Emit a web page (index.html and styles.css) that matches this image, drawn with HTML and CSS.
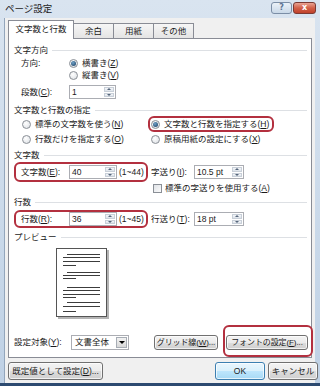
FILE: index.html
```html
<!DOCTYPE html>
<html lang="ja">
<head>
    <meta charset="UTF-8">
    <meta name="viewport" content="width=device-width, initial-scale=1.0">
    <title>ページ設定</title>
    <link rel="stylesheet" href="styles.css">
</head>
<body>
    <div class="window">
        <div class="titlebar">
            <span class="title">ページ設定</span>
            <div class="caption">
                <span class="cbtn help">?</span>
                <span class="cbtn close">x</span>
            </div>
        </div>

        <div class="client">
            <div class="tabs">
                <div class="tab active">文字数と行数</div>
                <div class="tab">余白</div>
                <div class="tab">用紙</div>
                <div class="tab">その他</div>
            </div>

            <div class="panel">
                <div class="grp h14">文字方向</div>
                <div class="row h12">
                    <span class="lbl">方向:</span>
                    <span class="opt"><span class="radio on"></span><span>横書き(<u>Z</u>)</span></span>
                </div>
                <div class="row h12">
                    <span class="opt ind-col"><span class="radio"></span><span>縦書き(<u>V</u>)</span></span>
                </div>
                <div class="row h22">
                    <span class="lbl">段数(<u>C</u>):</span>
                    <div class="field w47">
                        <span class="val">1</span>
                        <span class="spin"><span class="up"></span><span class="dn"></span></span>
                    </div>
                </div>

                <div class="grp h14">文字数と行数の指定</div>
                <div class="row h14">
                    <span class="opt left-opt"><span class="radio"></span><span>標準の文字数を使う(<u>N</u>)</span></span>
                    <span class="ring ring-radio">
                        <span class="opt"><span class="radio on"></span><span>文字数と行数を指定する(<u>H</u>)</span></span>
                    </span>
                </div>
                <div class="row h16">
                    <span class="opt left-opt"><span class="radio"></span><span>行数だけを指定する(<u>O</u>)</span></span>
                    <span class="opt right-opt"><span class="radio"></span><span>原稿用紙の設定にする(<u>X</u>)</span></span>
                </div>

                <div class="grp h16">文字数</div>
                <div class="row h18">
                    <span class="ring ring-count h20">
                        <span class="lbl">文字数(<u>E</u>):</span>
                        <div class="field w48">
                            <span class="val">40</span>
                            <span class="spin"><span class="up"></span><span class="dn"></span></span>
                        </div>
                        <span class="range">(1~44)</span>
                    </span>
                    <span class="lbl2">字送り(<u>I</u>):</span>
                    <div class="field w50">
                        <span class="val">10.5 pt</span>
                        <span class="spin"><span class="up"></span><span class="dn"></span></span>
                    </div>
                </div>
                <div class="row h14">
                    <span class="opt check-opt"><span class="check"></span><span>標準の字送りを使用する(<u>A</u>)</span></span>
                </div>

                <div class="grp h14">行数</div>
                <div class="row h20">
                    <span class="ring ring-count h18">
                        <span class="lbl">行数(<u>R</u>):</span>
                        <div class="field w48">
                            <span class="val">36</span>
                            <span class="spin"><span class="up"></span><span class="dn"></span></span>
                        </div>
                        <span class="range">(1~45)</span>
                    </span>
                    <span class="lbl2">行送り(<u>T</u>):</span>
                    <div class="field w50">
                        <span class="val">18 pt</span>
                        <span class="spin"><span class="up"></span><span class="dn"></span></span>
                    </div>
                </div>

                <div class="grp h16">プレビュー</div>
                <div class="preview">
                    <svg class="page" width="54" height="72" viewBox="0 0 54 72">
                        <rect x="2" y="2" width="51" height="69" fill="#b4b4b4"/>
                        <rect x="0.5" y="0.5" width="50" height="68" fill="#fff" stroke="#555"/>
                        <g stroke="#3c3c3c" stroke-width="1">
                            <line x1="11" y1="6.5" x2="44" y2="6.5"/>
                            <line x1="7" y1="9.5" x2="44" y2="9.5"/>
                            <line x1="7" y1="13.5" x2="44" y2="13.5"/>
                            <line x1="7" y1="17.5" x2="20" y2="17.5"/>
                            <line x1="11" y1="24.5" x2="44" y2="24.5"/>
                            <line x1="7" y1="27.5" x2="44" y2="27.5"/>
                            <line x1="7" y1="30.5" x2="20" y2="30.5"/>
                            <line x1="11" y1="39.5" x2="44" y2="39.5"/>
                            <line x1="7" y1="42.5" x2="44" y2="42.5"/>
                            <line x1="7" y1="46.5" x2="44" y2="46.5"/>
                            <line x1="7" y1="49.5" x2="20" y2="49.5"/>
                            <line x1="11" y1="54.5" x2="44" y2="54.5"/>
                            <line x1="7" y1="58.5" x2="44" y2="58.5"/>
                            <line x1="7" y1="63.5" x2="20" y2="63.5"/>
                        </g>
                    </svg>
                </div>

                <div class="row target">
                    <span class="tlbl">設定対象(<u>Y</u>):</span>
                    <div class="select">
                        <span class="val">文書全体</span>
                        <span class="drop"></span>
                    </div>
                    <span class="btn grid-btn"><span>グリッド線(<u>W</u>)...</span></span>
                    <span class="ring ring-font">
                        <span class="btn"><span>フォントの設定(<u>F</u>)...</span></span>
                    </span>
                </div>
            </div>

            <div class="footer">
                <span class="btn default-btn"><span>既定値として設定(<u>D</u>)...</span></span>
                <span class="btn ok">OK</span>
                <span class="btn cancel">キャンセル</span>
            </div>
        </div>
    </div>
</body>
</html>
```

FILE: styles.css
```css
* {
    box-sizing: border-box;
}
body {
    margin: 0;
    width: 320px;
    height: 386px;
    overflow: hidden;
    font-family: "Liberation Sans", "Noto Sans CJK JP", sans-serif;
    font-size: 8.5px;
    line-height: 1.2;
    color: #1a1a1a;
    background: #c4d5e7;
}
u {
    text-decoration: underline;
    text-underline-offset: 1px;
}
.window {
    width: 320px;
    height: 386px;
    display: flex;
    flex-direction: column;
    background: linear-gradient(#d9e4f0, #bfd1e5);
    border-bottom: 3px solid #2c4a70;
}
.titlebar {
    height: 18px;
    display: flex;
    align-items: center;
    justify-content: space-between;
    padding: 0 4px 0 5px;
}
.title {
    font-size: 9.5px;
    color: #222;
}
.caption {
    display: flex;
    gap: 1px;
    margin-top: -3px;
}
.cbtn {
    height: 12px;
    border-radius: 3px;
    display: flex;
    align-items: center;
    justify-content: center;
    font-family: "DejaVu Sans", sans-serif;
    font-weight: bold;
    font-size: 8px;
}
.help {
    width: 21px;
    border: 1px solid #7b8ea6;
    background: linear-gradient(#eaf1f8, #c9d8e8);
    color: #5a7394;
}
.close {
    width: 23px;
    border: 1px solid #7a3a34;
    background: linear-gradient(#e9a393, #d2614a 50%, #c0412b);
    color: #fff;
}
.client {
    flex: 1;
    margin: 0 5px 0 4px;
    padding: 2px 0 0 3px;
    background: #f0f0f0;
    border-left: 1px solid #93a6bc;
    display: flex;
    flex-direction: column;
}
.tabs {
    display: flex;
    align-items: flex-end;
    height: 18px;
}
.tab {
    width: 41px;
    height: 15px;
    margin-left: -1px;
    border: 1px solid #898c95;
    border-bottom: none;
    background: linear-gradient(#f6f6f6, #e4e4e4);
    display: flex;
    align-items: center;
    justify-content: center;
}
.tab.active {
    width: 66px;
    height: 19px;
    margin-left: 0;
    margin-bottom: -1px;
    background: #fff;
    position: relative;
    z-index: 1;
    padding-bottom: 2px;
}
.panel {
    width: 304px;
    height: 320px;
    border: 1px solid #898c95;
    background: #fff;
    padding: 4px 4px 0 5px;
}
.grp {
    display: flex;
    align-items: center;
}
.grp::after {
    content: "";
    flex: 1;
    height: 1px;
    background: #dde0e4;
    margin-left: 4px;
}
.row {
    display: flex;
    align-items: center;
}
.h12 { height: 12px; }
.h14 { height: 14px; }
.h16 { height: 16px; }
.h18 { height: 18px; }
.h20 { height: 20px; }
.h22 { height: 22px; }

.lbl {
    width: 48px;
    margin-left: 7px;
    flex-shrink: 0;
}
.lbl2 {
    width: 43px;
    margin-left: 3px;
    flex-shrink: 0;
}
.opt {
    display: flex;
    align-items: center;
    gap: 4px;
    white-space: nowrap;
}
.ind-col {
    margin-left: 55px;
}
.left-opt {
    width: 126px;
    margin-left: 8px;
}
.right-opt {
    margin-left: 3px;
}
.check-opt {
    margin-left: 139px;
    gap: 3px;
}
.radio {
    width: 9px;
    height: 9px;
    border-radius: 50%;
    border: 1px solid #8a8f96;
    background: radial-gradient(circle at 40% 35%, #fff, #d9dde2);
    display: flex;
    align-items: center;
    justify-content: center;
    flex-shrink: 0;
}
.radio.on::after {
    content: "";
    width: 5px;
    height: 5px;
    border-radius: 50%;
    background: radial-gradient(circle at 40% 35%, #6fa2c8, #16385c);
}
.check {
    width: 9px;
    height: 9px;
    border: 1px solid #8a8f96;
    background: linear-gradient(135deg, #dfe2e6, #fbfbfb);
    flex-shrink: 0;
}
.ring {
    border: 2px solid #b3303f;
    border-radius: 6px;
    display: flex;
    align-items: center;
    flex-shrink: 0;
}
.ring-radio {
    width: 126px;
    height: 16px;
    padding-left: 1px;
}
.ring-count {
    width: 134px;
}
.ring-count .lbl {
    margin-left: 5px;
}
.field {
    display: flex;
    height: 14px;
    border: 1px solid #abadb3;
    background: #fff;
    padding: 1px;
    flex-shrink: 0;
}
.w47 { width: 47px; }
.w48 { width: 48px; }
.w50 { width: 50px; }
.field .val {
    flex: 1;
    padding-left: 1px;
    line-height: 10px;
}
.spin {
    width: 10px;
    display: flex;
    flex-direction: column;
    gap: 1px;
}
.spin span {
    flex: 1;
    background: linear-gradient(#f4f6f9, #dde3ea);
    border: 1px solid #c8cfd8;
    display: flex;
    align-items: center;
    justify-content: center;
}
.spin .up::before {
    content: "";
    border-left: 2px solid transparent;
    border-right: 2px solid transparent;
    border-bottom: 2px solid #55657a;
}
.spin .dn::before {
    content: "";
    border-left: 2px solid transparent;
    border-right: 2px solid transparent;
    border-top: 2px solid #55657a;
}
.range {
    margin-left: 2px;
}
.preview {
    height: 80px;
    padding: 3px 0 0 42px;
}
.page {
    display: block;
}
.row.target {
    height: 32px;
    align-items: flex-start;
}
.tlbl {
    width: 57px;
    margin-top: 10px;
    line-height: 15px;
}
.select {
    display: flex;
    width: 58px;
    height: 15px;
    margin-top: 10px;
    border: 1px solid #abadb3;
    background: #fff;
    padding: 1px;
}
.select .val {
    flex: 1;
    padding-left: 2px;
    line-height: 11px;
}
.select .drop {
    width: 11px;
    border: 1px solid #a7adb5;
    background: linear-gradient(#f2f2f2, #d8d8d8);
    display: flex;
    align-items: center;
    justify-content: center;
}
.select .drop::before {
    content: "";
    border-left: 3px solid transparent;
    border-right: 3px solid transparent;
    border-top: 3px solid #000;
}
.btn {
    height: 15px;
    border: 1px solid #707070;
    border-radius: 3px;
    background: linear-gradient(#f3f3f3 0%, #ebebeb 50%, #dddddd 50%, #cfcfcf 100%);
    box-shadow: inset 0 0 0 1px rgba(255, 255, 255, 0.7);
    display: flex;
    align-items: center;
    justify-content: center;
    white-space: nowrap;
    flex-shrink: 0;
    font-size: 8px;
    letter-spacing: -0.1px;
}
.grid-btn {
    width: 64px;
    margin: 10px 0 0 25px;
}
.ring-font {
    width: 90px;
    height: 32px;
    margin-left: auto;
    margin-right: -6px;
    padding: 8px 3px 5px 1px;
    align-items: flex-start;
}
.ring-font .btn {
    width: 82px;
}
.footer {
    display: flex;
    align-items: center;
    padding-top: 4px;
    gap: 3px;
}
.footer .btn {
    height: 18px;
    font-size: 8.5px;
    letter-spacing: 0;
}
.default-btn {
    width: 95px;
}
.ok {
    width: 50px;
    margin-left: auto;
    border-color: #3c7fb1;
    background: linear-gradient(#eaf6fd 0%, #d9f0fc 50%, #bee6fd 50%, #a7d9f5 100%);
}
.cancel {
    width: 50px;
    margin-right: -3px;
}
```
